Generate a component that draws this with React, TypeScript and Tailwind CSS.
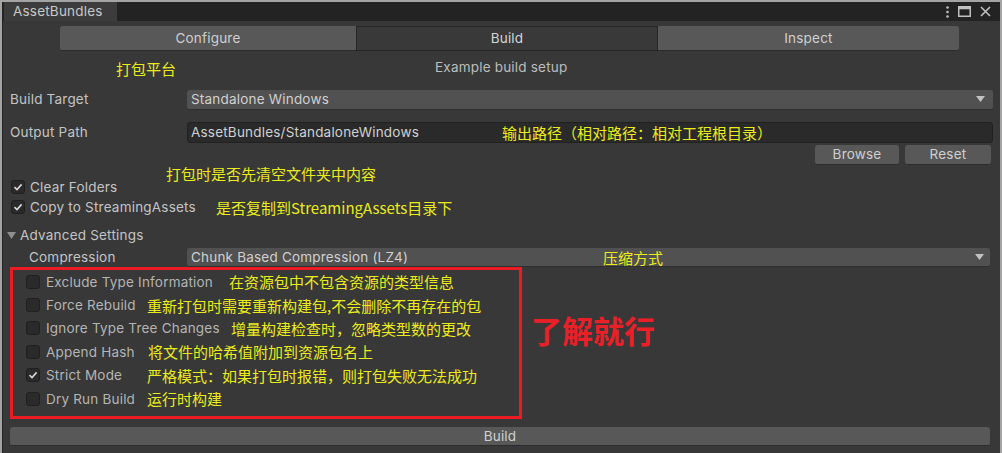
import React from "react";

const ui = "font-['Inter','Liberation_Sans',sans-serif]";
const cn = "font-['Noto_Sans_CJK_SC','Noto_Sans',sans-serif]";
const note = `${cn} text-[15px] leading-none tracking-normal text-[#ecec1c]`;

function Check({ on }: { on?: boolean }) {
  return (
    <div className="w-[14px] h-[14px] rounded-[3px] bg-[#2a2a2a] border border-[#1f1f1f] flex items-center justify-center shrink-0">
      {on && (
        <svg width="10" height="10" viewBox="0 0 10 10">
          <path d="M1.5 5.2 L4 7.6 L8.6 2.4" fill="none" stroke="#d6d6d6" strokeWidth="1.6" />
        </svg>
      )}
    </div>
  );
}

function Arrow() {
  return (
    <svg width="9" height="6" viewBox="0 0 9 6" className="shrink-0">
      <path d="M0 0 H9 L4.5 6 Z" fill="#c2c2c2" />
    </svg>
  );
}

const options = [
  { label: "Exclude Type Information", tip: "在资源包中不包含资源的类型信息", gap: "w-[183px]" },
  { label: "Force Rebuild", tip: "重新打包时需要重新构建包,不会删除不再存在的包", gap: "w-[101px]" },
  { label: "Ignore Type Tree Changes", tip: "增量构建检查时，忽略类型数的更改", gap: "w-[185px]" },
  { label: "Append Hash", tip: "将文件的哈希值附加到资源包名上", gap: "w-[102px]" },
  { label: "Strict Mode", tip: "严格模式：如果打包时报错，则打包失败无法成功", gap: "w-[101px]", on: true },
  { label: "Dry Run Build", tip: "运行时构建", gap: "w-[101px]" },
];

export default function App() {
  return (
    <div className={`w-[1002px] h-[453px] bg-[#383838] text-[13.5px] tracking-[0.2px] text-[#c4c4c4] border-t-2 border-l-2 border-r-2 border-[#a4a4a4] overflow-hidden ${ui}`}>
      <div className="h-full border-l border-[#242424] flex flex-col">
        {/* window tab bar */}
        <div className="h-[19px] bg-[#232323] flex items-stretch">
          <div className="ml-[1px] w-[113px] bg-[#3c3c3c] pl-[9px] flex items-center text-[13.5px] text-[#c8c8c8]">
            AssetBundles
          </div>
          <div className="flex-1" />
          <div className="flex items-center gap-[9px] pr-[9px] text-[#c0c0c0]">
            <svg width="3" height="12" viewBox="0 0 3 12">
              <circle cx="1.5" cy="1.5" r="1.3" fill="#c0c0c0" />
              <circle cx="1.5" cy="6" r="1.3" fill="#c0c0c0" />
              <circle cx="1.5" cy="10.5" r="1.3" fill="#c0c0c0" />
            </svg>
            <svg width="13" height="11" viewBox="0 0 13 11">
              <rect x="0.75" y="0.75" width="11.5" height="9.5" fill="none" stroke="#c0c0c0" strokeWidth="1.5" />
              <rect x="0.75" y="0.75" width="11.5" height="2.5" fill="#c0c0c0" />
            </svg>
            <svg width="11" height="11" viewBox="0 0 11 11">
              <path d="M1 1 L10 10 M10 1 L1 10" stroke="#c0c0c0" strokeWidth="1.6" />
            </svg>
          </div>
        </div>

        {/* mode toolbar */}
        <div className="mt-[5px] ml-[57px] w-[899px] h-[25px] flex">
          <div className="w-[296px] bg-[#585858] rounded-l-[3px] border-b border-[#2c2c2c] flex items-center justify-center text-[#cfcfcf]">
            Configure
          </div>
          <div className="w-[302px] bg-[#393939] border border-[#262626] flex items-center justify-center text-[#d4d4d4]">
            Build
          </div>
          <div className="flex-1 bg-[#585858] rounded-r-[3px] border-b border-[#2c2c2c] flex items-center justify-center text-[#cfcfcf]">
            Inspect
          </div>
        </div>

        {/* header */}
        <div className="h-[26px] mt-[3px] flex items-center">
          <span className={`ml-[113px] mt-[3px] ${note}`}>打包平台</span>
          <span className="ml-[259px] mt-[1px] text-[#bdbdbd]">Example build setup</span>
        </div>

        {/* build target */}
        <div className="mt-[9px] h-[21px] flex items-center pl-[7px] pr-[7px]">
          <span className="w-[177px]">Build Target</span>
          <div className="flex-1 h-[20px] bg-[#515151] rounded-[3px] border-b border-[#2e2e2e] flex items-center pl-[4px] pr-[8px] text-[#d0d0d0]">
            <span className="flex-1">Standalone Windows</span>
            <Arrow />
          </div>
        </div>

        {/* output path */}
        <div className="mt-[11px] h-[22px] flex items-center pl-[7px] pr-[7px]">
          <span className="w-[177px]">Output Path</span>
          <div className="flex-1 h-[21px] bg-[#2a2a2a] rounded-[3px] border border-[#212121] flex items-center pl-[3px] text-[#d0d0d0]">
            <span className="w-[311px]">AssetBundles/StandaloneWindows</span>
            <span className={`mt-[1px] ${note}`}>输出路径（相对路径：相对工程根目录）</span>
          </div>
        </div>

        {/* browse / reset */}
        <div className="mt-[2px] h-[20px] flex justify-end gap-[6px] pr-[9px]">
          <div className="w-[84px] bg-[#585858] rounded-[3px] border-b border-[#2c2c2c] flex items-center justify-center text-[#cfcfcf]">
            Browse
          </div>
          <div className="w-[86px] bg-[#585858] rounded-[3px] border-b border-[#2c2c2c] flex items-center justify-center text-[#cfcfcf]">
            Reset
          </div>
        </div>

        {/* clear folders note */}
        <div className="h-[16px] flex items-center">
          <span className={`ml-[163px] ${note}`}>打包时是否先清空文件夹中内容</span>
        </div>

        <div className="-mt-[4px] h-[20px] flex items-center gap-[5px] pl-[8px]">
          <Check on />
          <span>Clear Folders</span>
        </div>
        <div className="h-[20px] flex items-center gap-[5px] pl-[8px]">
          <Check on />
          <span className="w-[181px]">Copy to StreamingAssets</span>
          <span className={note}>是否复制到StreamingAssets目录下</span>
        </div>

        {/* advanced */}
        <div className="mt-[8px] h-[20px] flex items-center gap-[4px] pl-[4px]">
          <svg width="9" height="7" viewBox="0 0 9 7">
            <path d="M0 0 H9 L4.5 7 Z" fill="#8e8e8e" />
          </svg>
          <span>Advanced Settings</span>
        </div>
        <div className="mt-[3px] h-[19px] flex items-center pl-[26px] pr-[10px]">
          <span className="w-[158px]">Compression</span>
          <div className="flex-1 h-[19px] bg-[#515151] rounded-[3px] border-b border-[#2e2e2e] flex items-center pl-[4px] pr-[6px] text-[#d0d0d0]">
            <span className="w-[412px]">Chunk Based Compression (LZ4)</span>
            <span className={`flex-1 ${note}`}>压缩方式</span>
            <Arrow />
          </div>
        </div>

        {/* annotated options */}
        <div className="flex items-center">
          <div className="ml-[7px] w-[512px] h-[152px] border-[3px] border-[#ec1c24] pl-[13px] flex flex-col">
            {options.map((o) => (
              <div key={o.label} className="h-[23.4px] flex items-center">
                <Check on={o.on} />
                <span className={`ml-[6px] ${o.gap} text-[#b4b4b4]`}>{o.label}</span>
                <span className={note}>{o.tip}</span>
              </div>
            ))}
          </div>
          <span className={`ml-[9px] mb-[28px] ${cn} text-[31px] font-bold leading-none tracking-normal text-[#ea2029]`}>了解就行</span>
        </div>

        {/* build button */}
        <div className="mt-[8px] ml-[7px] mr-[10px] h-[19px] bg-[#585858] rounded-[3px] border-b border-[#2c2c2c] flex items-center justify-center text-[#d0d0d0]">
          Build
        </div>
      </div>
    </div>
  );
}
